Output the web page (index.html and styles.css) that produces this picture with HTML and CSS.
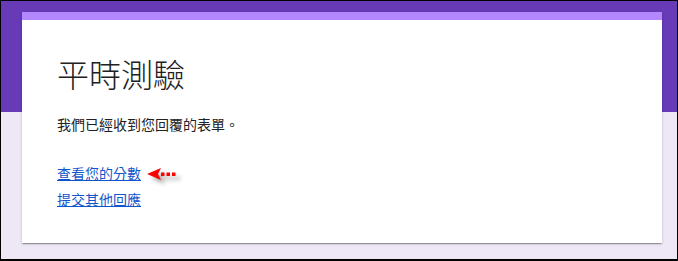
FILE: index.html
```html
<!DOCTYPE html>
<html lang="zh-Hant">
<head>
<meta charset="utf-8">
<title>平時測驗</title>
<link rel="stylesheet" href="styles.css">
</head>
<body>
<div class="frame">
  <div class="card">
    <h1 class="title">平時測驗</h1>
    <p class="message">我們已經收到您回覆的表單。</p>
    <div class="links">
      <div class="link-row">
        <a class="link" href="#">查看您的分數</a>
        <svg class="arrow" width="36" height="14" viewBox="0 0 36 14" aria-hidden="true">
          <polygon points="0,6 14,0 11,6 14,12" fill="#ff0000"/>
          <rect x="14" y="4.5" width="3.5" height="3.5" fill="#ff0000"/>
          <rect x="19.5" y="4.5" width="3.5" height="3.5" fill="#ff0000"/>
          <rect x="25" y="4.5" width="3.5" height="3.5" fill="#ff0000"/>
        </svg>
      </div>
      <div class="link-row">
        <a class="link" href="#">提交其他回應</a>
      </div>
    </div>
  </div>
</div>
</body>
</html>
```
FILE: styles.css
```css
html, body {
  margin: 0;
  padding: 0;
}
body {
  width: 678px;
  height: 261px;
  overflow: hidden;
  font-family: "Noto Sans CJK TC", "Noto Sans", sans-serif;
}
.frame {
  box-sizing: border-box;
  width: 678px;
  height: 261px;
  border-style: solid;
  border-color: #000;
  border-width: 1px 1px 2px 1px;
  background: linear-gradient(to bottom, #673ab7 0, #673ab7 111px, #ede7f6 111px, #ede7f6 100%);
  padding: 11px 0 0 21px;
}
.card {
  box-sizing: border-box;
  width: 640px;
  height: 231px;
  background: #fff;
  border-top: 8px solid #b388ff;
  box-shadow: 0 2px 1px -1px rgba(0,0,0,0.2), 0 1px 1px 0 rgba(0,0,0,0.14), 0 1px 3px 0 rgba(0,0,0,0.12);
  padding: 33px 35px 0 35px;
}
.title {
  margin: 0;
  font-size: 32px;
  line-height: 40px;
  font-weight: 300;
  color: #202124;
}
.message {
  margin: 21px 0 0 0;
  font-size: 14px;
  line-height: 20px;
  color: #202124;
}
.links {
  margin-top: 29px;
  display: flex;
  flex-direction: column;
  gap: 6px;
}
.link-row {
  display: flex;
  align-items: center;
  height: 20px;
}
.link {
  font-size: 14px;
  line-height: 20px;
  color: #1155cc;
  text-decoration: underline;
}
.arrow {
  margin-left: 6px;
  margin-top: 4px;
  filter: drop-shadow(4px 4px 2px rgba(0,0,0,0.35));
}
```
